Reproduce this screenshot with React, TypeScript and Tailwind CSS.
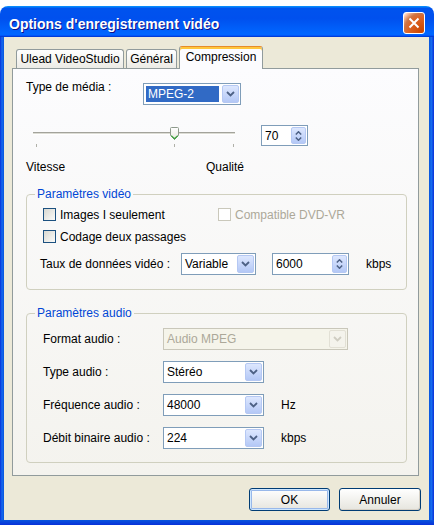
import React from "react";

function Chevron({ color = "#4d6185" }: { color?: string }) {
  return (
    <svg width="9" height="6" viewBox="0 0 9 6">
      <path d="M1 1L4.5 4.5L8 1" fill="none" stroke={color} strokeWidth="1.8" />
    </svg>
  );
}

function DropBtn({ disabled = false }: { disabled?: boolean }) {
  return disabled ? (
    <div className="m-px flex w-[17px] items-center justify-center rounded-[2px] border border-[#e2e0d5] bg-[#f4f3ec]">
      <Chevron color="#cfcdc2" />
    </div>
  ) : (
    <div className="m-px flex w-[17px] items-center justify-center rounded-[2px] border border-[#b5c8f3] bg-gradient-to-b from-[#dde7fe] to-[#b4c8f6]">
      <Chevron />
    </div>
  );
}

function Select({
  className,
  value,
  disabled = false,
  highlight = false,
}: {
  className: string;
  value: string;
  disabled?: boolean;
  highlight?: boolean;
}) {
  return (
    <div
      className={`flex h-[22px] border ${
        disabled ? "border-[#c9c7ba] bg-[#f5f4ea] text-[#aca899]" : "border-[#7f9db9] bg-white"
      } ${className}`}
    >
      <div className="flex flex-1 items-center">
        {highlight ? (
          <div className="m-[2px] flex h-[16px] flex-1 items-center bg-[#316ac5] pl-[2px] text-white">{value}</div>
        ) : (
          <div className="pl-[3px]">{value}</div>
        )}
      </div>
      <DropBtn disabled={disabled} />
    </div>
  );
}

function Spin({ className, value }: { className: string; value: string }) {
  return (
    <div className={`flex h-[21px] border border-[#7f9db9] bg-white ${className}`}>
      <div className="flex flex-1 items-center pl-[3px]">{value}</div>
      <div className="m-px flex w-[15px] flex-col items-center justify-center gap-[2px] rounded-[2px] border border-[#b5c8f3] bg-gradient-to-b from-[#dde7fe] to-[#b4c8f6]">
        <svg width="7" height="4" viewBox="0 0 7 4">
          <path d="M0.8 3.5L3.5 0.8L6.2 3.5" fill="none" stroke="#4d6185" strokeWidth="1.5" />
        </svg>
        <svg width="7" height="4" viewBox="0 0 7 4">
          <path d="M0.8 0.5L3.5 3.2L6.2 0.5" fill="none" stroke="#4d6185" strokeWidth="1.5" />
        </svg>
      </div>
    </div>
  );
}

function Check({ disabled = false }: { disabled?: boolean }) {
  return disabled ? (
    <div className="h-[13px] w-[13px] shrink-0 border border-[#cac8bb] bg-white" />
  ) : (
    <div className="h-[13px] w-[13px] shrink-0 border border-[#1c5180] bg-gradient-to-br from-[#d8d8d1] to-[#fbfbf9]" />
  );
}

function Slider() {
  return (
    <svg width="216" height="24" viewBox="0 0 216 24" className="shrink-0">
      <line x1="2" y1="9.5" x2="204" y2="9.5" stroke="#a3a39b" />
      <line x1="2" y1="10.5" x2="204" y2="10.5" stroke="#dcdcd4" />
      <line x1="2" y1="11.5" x2="204" y2="11.5" stroke="#ffffff" />
      <line x1="5.5" y1="21" x2="5.5" y2="24" stroke="#b0b0a8" />
      <line x1="143.5" y1="21" x2="143.5" y2="24" stroke="#b0b0a8" />
      <line x1="202.5" y1="21" x2="202.5" y2="24" stroke="#b0b0a8" />
      <defs>
        <linearGradient id="th" x1="0" y1="0" x2="0" y2="1">
          <stop offset="0" stopColor="#ffffff" />
          <stop offset="1" stopColor="#e9e8e0" />
        </linearGradient>
      </defs>
      <path
        d="M139.5 5.5Q139.5 4.5 140.5 4.5H146.5Q147.5 4.5 147.5 5.5V12.5L143.5 16.5L139.5 12.5Z"
        fill="url(#th)"
        stroke="#8e9a8c"
      />
      <path d="M140.2 12.6L143.5 15.8L146.8 12.6" fill="none" stroke="#3ea23e" strokeWidth="1.2" />
    </svg>
  );
}

export default function App() {
  return (
    <div className="h-[525px] w-[434px] overflow-hidden bg-white pt-[6px] font-['Liberation_Sans',Arial,sans-serif] text-[12px] leading-[14px] text-black">
      <div className="flex h-[519px] flex-col overflow-hidden rounded-t-[8px]">
        {/* Title bar */}
        <div className="flex h-[31px] shrink-0 items-start justify-between bg-[linear-gradient(180deg,#0997ff,#0053ee_8%,#0050ee_40%,#0066ff_88%,#0066ff_93%,#005bff_95%,#003dd7_96%,#003dd7)]">
          <div className="mt-[10px] pl-[9px] text-[14px] font-bold leading-[16px] text-white [text-shadow:1px_1px_#0f1089]">
            Options d'enregistrement vidéo
          </div>
          <div className="mr-[9px] mt-[6px] flex h-[22px] w-[22px] items-center justify-center rounded-[3px] border border-white bg-[radial-gradient(circle_at_90%_90%,#cc4600_0,#dc6527_55%,#cd7546_70%,#ffccb2_90%,#fff_100%)]">
            <svg width="12" height="12" viewBox="0 0 12 12">
              <path d="M1.5 1.5L10.5 10.5M10.5 1.5L1.5 10.5" stroke="#ffffff" strokeWidth="2" />
            </svg>
          </div>
        </div>

        {/* Frame + client */}
        <div className="flex h-[483px] shrink-0">
          <div className="w-[4px] bg-[linear-gradient(to_right,#0831d9,#166aee,#0855dd)]" />
          <div className="flex w-[425px] flex-col bg-[#ece9d8]">
            {/* Tabs */}
            <div className="flex h-[22px] items-end pl-[12px] mt-[9px]">
              <div className="flex h-[19px] w-[108px] items-center justify-center rounded-t-[3px] border border-b-0 border-[#919b9c] bg-gradient-to-b from-white to-[#ecebe5]">
                Ulead VideoStudio
              </div>
              <div className="ml-[2px] flex h-[19px] w-[51px] items-center justify-center rounded-t-[3px] border border-b-0 border-[#919b9c] bg-gradient-to-b from-white to-[#ecebe5]">
                Général
              </div>
              <div className="relative z-10 -mb-[1px] ml-[2px] flex h-[23px] w-[84px] items-start justify-center rounded-t-[3px] border border-b-0 border-x-[#919b9c] border-t-[#e68b2c] bg-[#fcfcfe] pt-[3px] shadow-[inset_0_2px_0_#ffc73c]">
                Compression
              </div>
            </div>

            {/* Panel */}
            <div className="ml-[8px] flex h-[408px] w-[407px] flex-col border border-[#919b9c] bg-gradient-to-b from-[#fcfcfe] to-[#f4f3ee] pl-[13px] pt-[14px]">
              <div className="flex h-[22px] items-start">
                <div className="-mt-[3px] w-[117px]">Type de média :</div>
                <Select className="w-[98px]" value="MPEG-2" highlight />
              </div>

              <div className="mt-[18px] flex h-[24px] items-start">
                <div className="ml-[5px]">
                  <Slider />
                </div>
                <Spin className="ml-[14px] mt-[2px] w-[47px]" value="70" />
              </div>

              <div className="mt-[13px] flex h-[14px] w-[218px] justify-between">
                <span>Vitesse</span>
                <span>Qualité</span>
              </div>

              {/* Video params */}
              <fieldset className="mt-[13px] w-[381px] rounded-[4px] border border-[#d0d0bf]">
                <legend className="ml-[8px] px-[2px] text-[#0046d5]">Paramètres vidéo</legend>
                <div className="flex flex-col pb-[14px] pl-[13px]">
                  <div className="mt-[7px] flex h-[13px] items-center">
                    <div className="ml-[3px] flex w-[175px] items-center gap-[4px]">
                      <Check />
                      <span>Images I seulement</span>
                    </div>
                    <div className="flex items-center gap-[4px] text-[#aca899]">
                      <Check disabled />
                      <span>Compatible DVD-VR</span>
                    </div>
                  </div>
                  <div className="mt-[9px] flex h-[13px] items-center">
                    <div className="ml-[3px] flex items-center gap-[4px]">
                      <Check />
                      <span>Codage deux passages</span>
                    </div>
                  </div>
                  <div className="mt-[10px] flex h-[22px] items-center">
                    <div className="w-[141px]">Taux de données vidéo :</div>
                    <Select className="w-[75px]" value="Variable" />
                    <Spin className="ml-[16px] h-[22px] w-[77px]" value="6000" />
                    <div className="ml-[17px]">kbps</div>
                  </div>
                </div>
              </fieldset>

              {/* Audio params */}
              <fieldset className="mt-[16px] w-[381px] rounded-[4px] border border-[#d0d0bf]">
                <legend className="ml-[8px] px-[2px] text-[#0046d5]">Paramètres audio</legend>
                <div className="flex flex-col gap-[11px] pb-[13px] pl-[16px] pt-[8px]">
                  <div className="flex h-[22px] items-center">
                    <div className="w-[120px]">Format audio :</div>
                    <Select className="w-[185px]" value="Audio MPEG" disabled />
                  </div>
                  <div className="flex h-[22px] items-center">
                    <div className="w-[120px]">Type audio :</div>
                    <Select className="w-[101px]" value="Stéréo" />
                  </div>
                  <div className="flex h-[22px] items-center">
                    <div className="w-[120px]">Fréquence audio :</div>
                    <Select className="w-[101px]" value="48000" />
                    <div className="ml-[17px]">Hz</div>
                  </div>
                  <div className="flex h-[22px] items-center">
                    <div className="w-[120px]">Débit binaire audio :</div>
                    <Select className="w-[101px]" value="224" />
                    <div className="ml-[17px]">kbps</div>
                  </div>
                </div>
              </fieldset>
            </div>

            {/* Buttons */}
            <div className="mt-[12px] flex justify-end gap-[9px] pr-[8px]">
              <button className="h-[23px] w-[81px] rounded-[3px] border border-[#003c74] bg-gradient-to-b from-white to-[#e6e5de] shadow-[inset_0_0_0_1px_#cee7ff,inset_0_0_0_2px_#98b8ea]">
                OK
              </button>
              <button className="h-[23px] w-[82px] rounded-[3px] border border-[#003c74] bg-gradient-to-b from-white to-[#e6e5de] shadow-[inset_-1px_-1px_0_#d6d0c5]">
                Annuler
              </button>
            </div>
          </div>
          <div className="w-[5px] bg-[linear-gradient(to_right,#0855dd,#166aee,#0831d9)]" />
        </div>
        <div className="h-[5px] shrink-0 bg-[linear-gradient(to_bottom,#0855dd,#0831d9)]" />
      </div>
    </div>
  );
}
